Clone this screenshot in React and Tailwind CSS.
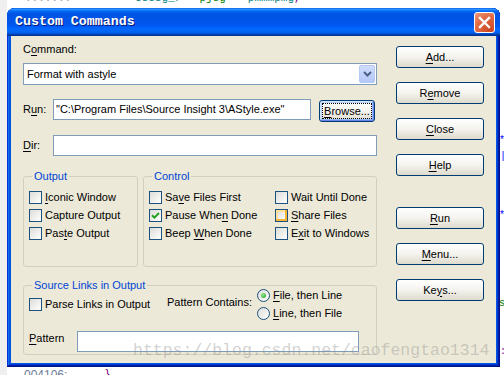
const U = ({ children }) => <span className="underline decoration-1 underline-offset-[2px]">{children}</span>;

const Checkbox = ({ checked, hover }) => (
  <span
    className={`flex h-[13px] w-[13px] shrink-0 items-center justify-center border border-[#1c5180] bg-linear-to-br from-[#dcdcd7] to-white ${
      hover ? "shadow-[inset_-2px_-2px_#f8b636,inset_2px_2px_#fedf9c]" : ""
    }`}
  >
    {checked && (
      <svg width="9" height="9" viewBox="0 0 9 9">
        <path d="M1 4.2 L3.4 6.6 L8 2" fill="none" stroke="#21a121" strokeWidth="2" />
      </svg>
    )}
  </span>
);

const Check = ({ children, checked, hover }) => (
  <div className="flex h-[18px] items-center gap-[3px] whitespace-nowrap">
    <Checkbox checked={checked} hover={hover} />
    <span>{children}</span>
  </div>
);

const Radio = ({ children, checked }) => (
  <div className="flex h-[18px] items-center gap-[3px] whitespace-nowrap">
    <span className="flex h-[13px] w-[13px] items-center justify-center rounded-full border border-[#1c5180] bg-linear-to-br from-[#dcdcd7] to-white">
      {checked && <span className="h-[5px] w-[5px] rounded-full bg-[radial-gradient(circle_at_35%_35%,#8ee88e,#21a121)]" />}
    </span>
    <span>{children}</span>
  </div>
);

const XpButton = ({ children, className = "" }) => (
  <button className={`flex h-[22px] w-[88px] items-center justify-center rounded-[3px] border border-[#003c74] bg-linear-to-b from-white via-[#f4f3ee] to-[#dedbcd] leading-none text-black ${className}`}>
    {children}
  </button>
);

const Group = ({ title, className = "", children }) => (
  <fieldset className={`rounded-[3px] border border-[#d0d0bf] ${className}`}>
    <legend className="ml-[8px] px-[2px] leading-[13px] text-[#0046d5]">{title}</legend>
    {children}
  </fieldset>
);

const TextBox = ({ className = "", children }) => (
  <div className={`flex items-center border border-[#7f9db9] bg-white pl-[2px] leading-none ${className}`}>{children}</div>
);

export default function App() {
  return (
    <div className="relative flex h-[375px] w-[504px] overflow-hidden bg-white font-['Liberation_Sans',Arial,sans-serif] text-[11px] text-black">
      <div className="h-full w-[7px] bg-[#efefef]" />

      <div className="flex w-[493px] flex-col">
        {/* code behind the dialog */}
        <div className="flex h-[8px] overflow-hidden font-['Liberation_Mono',monospace] text-[11px] leading-[11px]">
          <span className="-mt-[7px] ml-[18px] text-[#9a9a9a]">.......</span>
          <span className="-mt-[7px] ml-[64px] text-[#008080]">ssssg_r</span>
          <span className="-mt-[7px] ml-[18px] text-[#008000]">pjsg</span>
          <span className="-mt-[7px] ml-[22px] text-[#008080]">pmmmpmg</span>
          <span className="-mt-[7px] text-[#800080]">,</span>
        </div>

        <div className="flex h-[359px] flex-col rounded-t-[8px] bg-[#0054e3] shadow-[inset_-1px_-1px_#00138c,inset_1px_1px_#0831d9,inset_-2px_-2px_#001ea0,inset_2px_2px_#166aee,inset_-3px_-3px_#003bda,inset_3px_3px_#0855dd]">
          <div className="flex h-[28px] items-center rounded-t-[8px] bg-[linear-gradient(to_bottom,#0058ee_0%,#3593ff_4%,#288eff_6%,#127dff_8%,#036ffc_10%,#0262ee_14%,#0057e5_20%,#0054e3_24%,#0055eb_56%,#005bf5_66%,#026afe_76%,#0062ef_86%,#0052d6_92%,#0040ab_94%,#003092_100%)] pl-[8px] pr-[5px]">
            <span className="flex-1 font-['Liberation_Mono',monospace] text-[13.3px] font-bold text-white [text-shadow:1px_1px_0_#0a1878]">
              Custom Commands
            </span>
            <span className="flex h-[21px] w-[21px] items-center justify-center rounded-[3px] border border-white bg-[radial-gradient(circle_at_80%_90%,#cc4622,#e26b43_60%,#f09c80)]">
              <svg width="13" height="13" viewBox="0 0 13 13">
                <path d="M2 2 L11 11 M11 2 L2 11" stroke="white" strokeWidth="2.4" strokeLinecap="square" />
              </svg>
            </span>
          </div>

          <div className="mx-[4px] flex h-[327px] bg-[#ece9d8] px-[12px]">
            {/* left column */}
            <div className="flex w-[354px] flex-col">
              <div className="mt-[7px] leading-[13px]">
                C<U>o</U>mmand:
              </div>
              <div className="mt-[7px] flex h-[22px] border border-[#7f9db9] bg-white">
                <span className="flex flex-1 items-center pl-[3px]">Format with astyle</span>
                <span className="m-[1px] flex w-[16px] items-center justify-center rounded-[2px] border border-[#b5c8f6] bg-linear-to-b from-[#cfdcfd] to-[#b4c8f7]">
                  <svg width="9" height="6" viewBox="0 0 9 6">
                    <path d="M1 1 L4.5 4.5 L8 1" fill="none" stroke="#4d6185" strokeWidth="2" />
                  </svg>
                </span>
              </div>

              <div className="mt-[14px] flex items-start">
                <span className="w-[30px] pt-[4px] leading-[13px]">
                  R<U>u</U>n:
                </span>
                <TextBox className="h-[21px] w-[258px]">"C:\Program Files\Source Insight 3\AStyle.exe"</TextBox>
                <button className="ml-[8px] mt-[1px] flex h-[22px] w-[56px] rounded-[3px] border border-[#003c74] bg-linear-to-b from-white via-[#f4f3ee] to-[#dedbcd] p-[2px] leading-none shadow-[inset_-1px_-1px_#6982ee,inset_1px_1px_#cee7ff,inset_-2px_-2px_#94bafb,inset_2px_2px_#bcd4f6]">
                  <span className="flex flex-1 items-center justify-center border border-dotted border-black">
                    <U>B</U>rowse...
                  </span>
                </button>
              </div>

              <div className="mt-[13px] flex items-start">
                <span className="w-[30px] pt-[4px] leading-[13px]">
                  <U>D</U>ir:
                </span>
                <TextBox className="h-[21px] flex-1" />
              </div>

              <div className="mt-[14px] flex gap-[5px]">
                <Group title="Output" className="h-[97px] w-[115px]">
                  <div className="pl-[5px] pt-[5px]">
                    <Check>
                      <U>I</U>conic Window
                    </Check>
                    <Check>Capture Output</Check>
                    <Check>
                      Pas<U>t</U>e Output
                    </Check>
                  </div>
                </Group>
                <Group title="Control" className="h-[97px] w-[234px]">
                  <div className="grid grid-cols-[126px_1fr] pl-[5px] pt-[5px]">
                    <Check>
                      Sa<U>v</U>e Files First
                    </Check>
                    <Check>Wait Until Done</Check>
                    <Check checked>
                      Pause Whe<U>n</U> Done
                    </Check>
                    <Check hover>
                      <U>S</U>hare Files
                    </Check>
                    <Check>
                      Beep <U>W</U>hen Done
                    </Check>
                    <Check>
                      E<U>x</U>it to Windows
                    </Check>
                  </div>
                </Group>
              </div>

              <Group title="Source Links in Output" className="mt-[12px] h-[76px] w-full">
                <div className="flex items-start pl-[5px]">
                  <div className="mt-[3px] w-[138px]">
                    <Check>Parse Links in Output</Check>
                  </div>
                  <span className="mt-[1px] flex h-[18px] w-[90px] items-center">Pattern Contains:</span>
                  <div className="-mt-[6px] flex flex-col">
                    <Radio checked>
                      <U>F</U>ile, then Line
                    </Radio>
                    <Radio>
                      <U>L</U>ine, then File
                    </Radio>
                  </div>
                </div>
                <div className="mt-[9px] flex items-start pl-[5px]">
                  <span className="w-[48px] pt-[1px] leading-[13px]">
                    <U>P</U>attern
                  </span>
                  <TextBox className="h-[21px] w-[282px]" />
                </div>
              </Group>
            </div>

            {/* right buttons */}
            <div className="ml-[19px] flex flex-col">
              <XpButton className="mt-[10px]">
                <U>A</U>dd...
              </XpButton>
              <XpButton className="mt-[14px]">
                R<U>e</U>move
              </XpButton>
              <XpButton className="mt-[14px]">
                <U>C</U>lose
              </XpButton>
              <XpButton className="mt-[14px]">
                <U>H</U>elp
              </XpButton>
              <XpButton className="mt-[31px]">
                <U>R</U>un
              </XpButton>
              <XpButton className="mt-[14px]">
                <U>M</U>enu...
              </XpButton>
              <XpButton className="mt-[14px]">
                Ke<U>y</U>s...
              </XpButton>
            </div>
          </div>
        </div>

        <div className="flex h-[8px] overflow-hidden font-['Liberation_Sans',Arial,sans-serif] text-[12px] leading-[12px]">
          <span className="ml-[17px] mt-[2px] text-[#6b7a99]">004106:</span>
          <span className="ml-[38px] mt-[1px] text-[#800080]">}</span>
        </div>
      </div>

      <div className="flex w-[4px] flex-col overflow-hidden font-['Liberation_Mono',monospace] text-[10px] leading-[8px]">
        <span className="mt-[137px] -ml-[1px] text-[#0000ff]">*</span>
        <span className="mt-[8px] text-[#0000ff]">|</span>
        <span className="mt-[51px] -ml-[1px] text-[#0000ff]">*</span>
        <span className="mt-[80px] -ml-[1px] text-[#008000]">s</span>
        <span className="mt-[40px] text-[#800080]">:</span>
      </div>

      {/* watermark */}
      <div className="pointer-events-none absolute left-[133px] top-[343px] font-['Liberation_Mono',monospace] text-[16.5px] leading-none text-[rgba(140,140,140,0.4)]">
        https://blog.csdn.net/caofengtao1314
      </div>
    </div>
  );
}
